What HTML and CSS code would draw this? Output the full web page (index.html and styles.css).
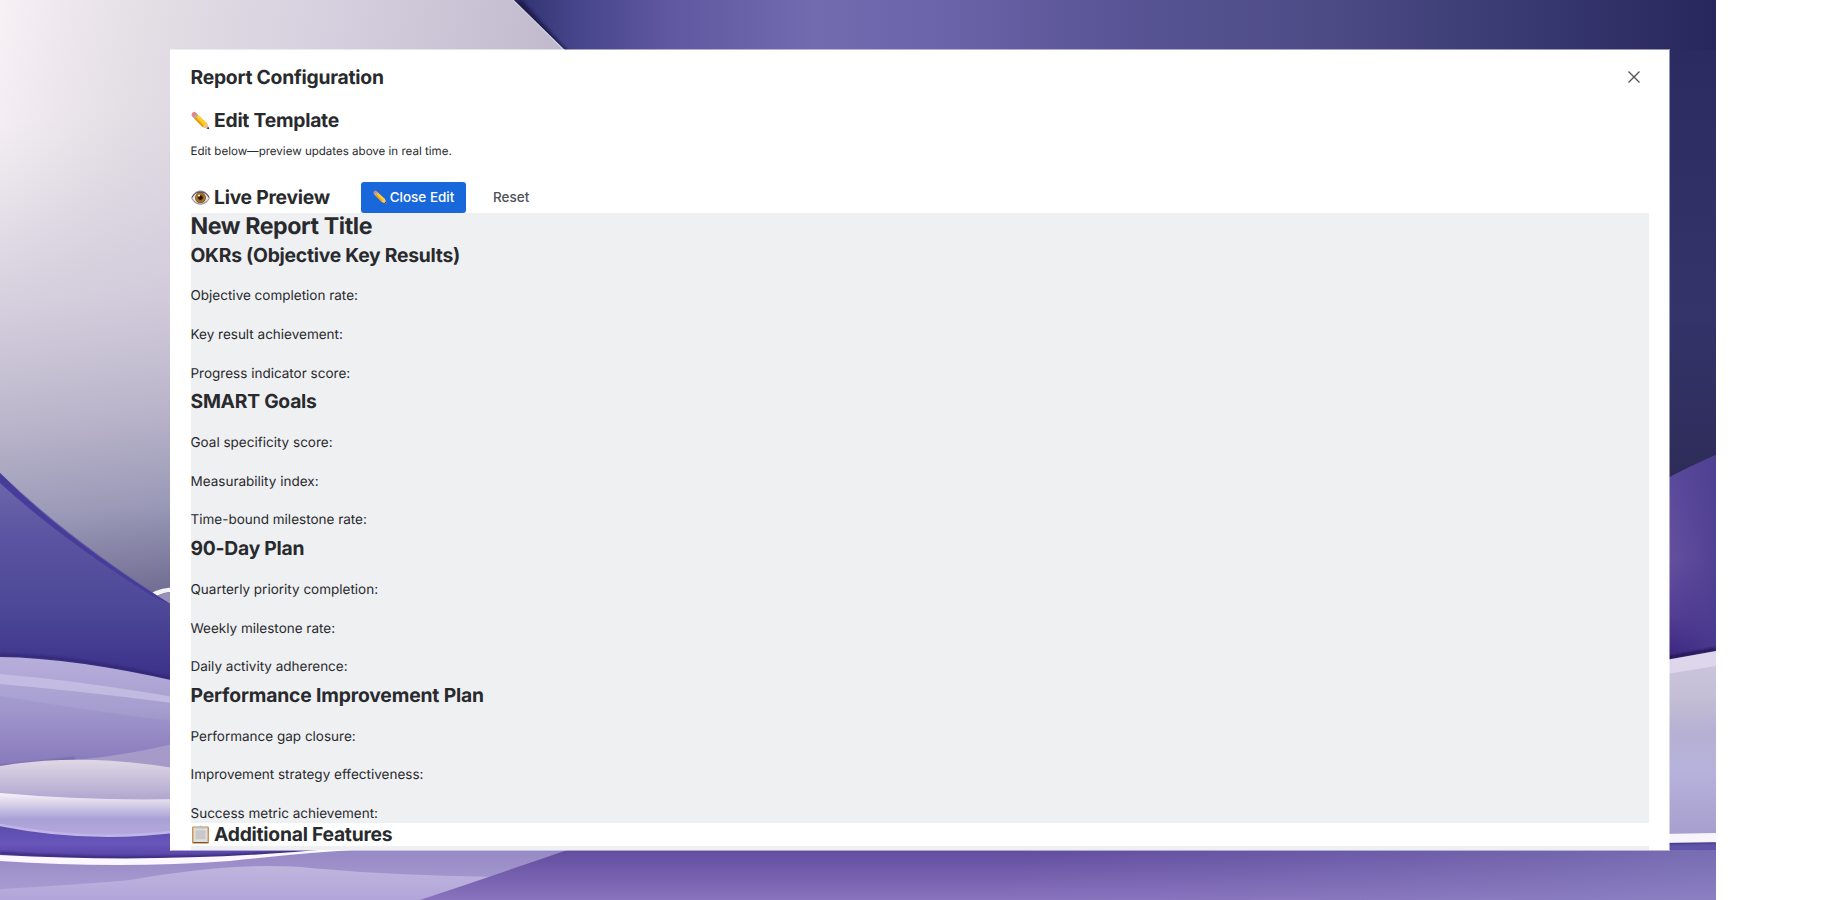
FILE: index.html
```html
<!DOCTYPE html>
<html lang="en">
<head>
<meta charset="utf-8">
<title>Report Configuration</title>
<link rel="stylesheet" href="styles.css">
</head>
<body>
<svg class="wallpaper" viewBox="0 0 1716 900" preserveAspectRatio="none" aria-hidden="true">
  <defs>
    <linearGradient id="sky" x1="500" x2="1716" y1="0" y2="0" gradientUnits="userSpaceOnUse">
      <stop offset="0" stop-color="#2a2d68"/><stop offset=".06" stop-color="#45448a"/><stop offset=".14" stop-color="#6058a0"/><stop offset=".26" stop-color="#736bb0"/><stop offset=".36" stop-color="#6c64aa"/><stop offset=".5" stop-color="#595596"/><stop offset=".68" stop-color="#4d4b86"/><stop offset=".82" stop-color="#3b3c74"/><stop offset="1" stop-color="#27275d"/>
    </linearGradient>
    <linearGradient id="night" x1="0" x2="0" y1="0" y2="1"><stop offset="0" stop-color="#2b2b62"/><stop offset=".6" stop-color="#34336a"/><stop offset="1" stop-color="#2d2c57"/></linearGradient>
    <linearGradient id="pearl" x1="0" y1="0" x2="560" y2="110" gradientUnits="userSpaceOnUse"><stop offset="0" stop-color="#f7f1f6"/><stop offset=".25" stop-color="#e4dee5"/><stop offset=".6" stop-color="#d5cede"/><stop offset="1" stop-color="#c0b9cc"/></linearGradient>
    <linearGradient id="pearlShade" x1="30" y1="120" x2="90" y2="600" gradientUnits="userSpaceOnUse"><stop offset="0" stop-color="#d8d2e0" stop-opacity="0"/><stop offset=".4" stop-color="#cfc9da" stop-opacity=".9"/><stop offset=".62" stop-color="#bbb5cb"/><stop offset=".82" stop-color="#9a99b7"/><stop offset="1" stop-color="#716d93"/></linearGradient>
    <linearGradient id="indigo" x1="0" y1="470" x2="0" y2="680" gradientUnits="userSpaceOnUse"><stop offset="0" stop-color="#6d6aad"/><stop offset=".35" stop-color="#5952a0"/><stop offset=".65" stop-color="#4d4998"/><stop offset="1" stop-color="#3b3089"/></linearGradient>
    <linearGradient id="waveA" x1="0" y1="657" x2="0" y2="765" gradientUnits="userSpaceOnUse"><stop offset="0" stop-color="#b7aedb"/><stop offset=".5" stop-color="#a59dce"/><stop offset="1" stop-color="#8779ba"/></linearGradient>
    <linearGradient id="waveB" x1="0" y1="760" x2="0" y2="798" gradientUnits="userSpaceOnUse"><stop offset="0" stop-color="#ded8e5"/><stop offset="1" stop-color="#b2a8d1"/></linearGradient>
    <linearGradient id="waveC" x1="0" y1="794" x2="0" y2="836" gradientUnits="userSpaceOnUse"><stop offset="0" stop-color="#f3f0fa"/><stop offset=".2" stop-color="#dcd6ea"/><stop offset=".6" stop-color="#a8a0d6"/><stop offset="1" stop-color="#b6aadd"/></linearGradient>
    <linearGradient id="waveD" x1="0" y1="826" x2="0" y2="860" gradientUnits="userSpaceOnUse"><stop offset="0" stop-color="#594bab"/><stop offset=".5" stop-color="#6957bb"/><stop offset="1" stop-color="#5440a3"/></linearGradient>
    <linearGradient id="waveE" x1="0" y1="850" x2="0" y2="900" gradientUnits="userSpaceOnUse"><stop offset="0" stop-color="#9689c5"/><stop offset="1" stop-color="#aba0d4"/></linearGradient>
    <linearGradient id="waveF" x1="0" y1="866" x2="0" y2="900" gradientUnits="userSpaceOnUse"><stop offset="0" stop-color="#bfb5dd"/><stop offset="1" stop-color="#b1a5d9"/></linearGradient>
    <linearGradient id="floor" x1="0" y1="850" x2="0" y2="900" gradientUnits="userSpaceOnUse"><stop offset="0" stop-color="#614c9e"/><stop offset="1" stop-color="#8973be"/></linearGradient>
    <linearGradient id="floorTint" x1="1000" y1="0" x2="1716" y2="0" gradientUnits="userSpaceOnUse"><stop offset="0" stop-color="#817bb9" stop-opacity="0"/><stop offset="1" stop-color="#8f8dc6" stop-opacity=".5"/></linearGradient>
    <linearGradient id="violet" x1="0" y1="460" x2="0" y2="656" gradientUnits="userSpaceOnUse"><stop offset="0" stop-color="#58499a"/><stop offset=".5" stop-color="#654f9f"/><stop offset=".8" stop-color="#523d93"/><stop offset="1" stop-color="#3c2780"/></linearGradient>
    <linearGradient id="violetSide" x1="1670" y1="0" x2="1716" y2="0" gradientUnits="userSpaceOnUse"><stop offset="0" stop-color="#4b3d90" stop-opacity="0"/><stop offset="1" stop-color="#4b3d90" stop-opacity=".75"/></linearGradient>
    <linearGradient id="mist" x1="0" y1="665" x2="0" y2="834" gradientUnits="userSpaceOnUse"><stop offset="0" stop-color="#cac4dc"/><stop offset=".2" stop-color="#c3bed5"/><stop offset=".4" stop-color="#b6b0d3"/><stop offset=".62" stop-color="#b7b2dc"/><stop offset="1" stop-color="#a79fce"/></linearGradient>
    <filter id="soft" x="-10%" y="-10%" width="120%" height="120%"><feGaussianBlur stdDeviation="1.6"/></filter>
    <filter id="softLine" filterUnits="userSpaceOnUse" x="0" y="0" width="1716" height="900"><feGaussianBlur stdDeviation="1.2"/></filter>
  </defs>
  <rect width="1716" height="900" fill="url(#sky)"/>
  <rect x="1660" y="50" width="56" height="440" fill="url(#night)"/>
  <path d="M511 0H522Q552 34 576 60H558Z" fill="#1d1b50" filter="url(#soft)"/>
  <path d="M0 0H513L570 56V620H0Z" fill="url(#pearl)"/>
  <path d="M0 0H513L570 56V620H0Z" fill="url(#pearlShade)"/>
  <path d="M513 0L565 51" stroke="#d8d2df" stroke-width="1.2"/>
  <path d="M150 594Q160 587 180 587V592Q164 591 155 597Z" fill="#f5f2f7"/>
  <path d="M155 597Q166 591 180 592V610Z" fill="#9791b7"/>
  <path d="M0 473Q72 542 175 607V690H0Z" fill="url(#indigo)"/>
  <path d="M0 473Q68 542 172 605L152 596Q60 538 0 483Z" fill="#473c99"/>
  <path d="M0 655Q80 656 180 681" fill="none" stroke="#2d216d" stroke-opacity=".7" stroke-width="3" filter="url(#softLine)"/>
  <path d="M0 657Q75 658 180 682V780H0Z" fill="url(#waveA)"/>
  <path d="M0 674Q75 680 180 698V704Q90 692 0 684Z" fill="#c8c0e4" opacity=".8"/>
  <path d="M0 696Q90 711 180 722V746Q115 756 0 766Z" fill="#8e80c5" opacity=".22"/>
  <path d="M75 760Q135 754 180 742V775H75Z" fill="#a69bc8"/>
  <path d="M0 766Q45 762 75 758" fill="none" stroke="#6c5b98" stroke-width="1.500" filter="url(#softLine)"/>
  <path d="M0 766Q82 752 180 769V803H0Z" fill="url(#waveB)"/>
  <path d="M0 793Q90 801 180 799V840H0Z" fill="url(#waveC)"/>
  <path d="M0 825Q90 843 180 831V850H600V868H0Z" fill="url(#waveD)"/>
  <path d="M0 825Q90 843 180 831" fill="none" stroke="#c1b5e7" stroke-width="2.5"/>
  <path d="M0 853Q150 864 340 848" fill="none" stroke="#302168" stroke-opacity=".8" stroke-width="2.5" filter="url(#softLine)"/>
  <path d="M0 859Q160 871 300 853Q360 845 420 845H600V900H0Z" fill="url(#waveE)"/>
  <path d="M0 855Q170 864 330 849H372Q310 852 230 861Q120 869 0 861Z" fill="#fbf7ff"/>
  <path d="M0 889Q75 885 130 880Q240 861 310 868Q400 876 500 877V900H0Z" fill="url(#waveF)"/>
  <path d="M420 900Q504 872 576 847H1716V900Z" fill="url(#floor)"/>
  <path d="M900 847H1716V900H900Z" fill="url(#floorTint)"/>
  <path d="M1660 482Q1690 466 1716 455V665H1660Z" fill="url(#violet)"/>
  <path d="M1660 482Q1690 466 1716 455V665H1660Z" fill="url(#violetSide)"/>
  <path d="M1660 659L1716 649" stroke="#251654" stroke-width="3" filter="url(#softLine)"/>
  <path d="M1660 661L1716 651V845H1660Z" fill="#ded7ec"/>
  <path d="M1660 675L1716 666V845H1660Z" fill="url(#mist)"/>
  <path d="M1660 843H1716V850H1660Z" fill="#5f55a8"/>
  <path d="M1660 843L1716 842" stroke="#362a7a" stroke-width="2" filter="url(#softLine)"/>
  <path d="M1660 834L1716 833V842L1660 843Z" fill="#f7f5fb"/>
</svg>

<svg class="symbols" aria-hidden="true">
  <defs>
    <linearGradient id="wood" x1="0" y1="1" x2="1" y2="0"><stop offset="0" stop-color="#e59a12"/><stop offset=".5" stop-color="#ffc928"/><stop offset="1" stop-color="#ffda4a"/></linearGradient>
    <radialGradient id="iris"><stop offset="0" stop-color="#20100a"/><stop offset=".32" stop-color="#28150b"/><stop offset=".5" stop-color="#8c5a18"/><stop offset=".8" stop-color="#b27a22"/><stop offset="1" stop-color="#4c2c12"/></radialGradient>
  </defs>
  <symbol id="pencil" viewBox="0 0 20 20">
    <path d="M5.4 2.1L16.9 12.6L19.3 19.3L12.2 17L1.6 6.2Z" fill="url(#wood)"/>
    <path d="M3.2 7.5L12.2 16.8L13.8 15.8L4.2 5.2Z" fill="#d98b12" opacity=".65"/>
    <path d="M16.8 12.6L19.2 19.2L12.2 16.8L13.6 15.2L15.2 14.6Z" fill="#e8c69a"/>
    <path d="M18.2 16.5L19.3 19.3L16.4 18.3Z" fill="#37322f"/>
    <path d="M2 6.4L5.6 2.4L7.5 4.2L3.9 8.2Z" fill="#9db0ba"/>
    <path d="M.8 5C-.1 3.1 2.2.5 4.2.8L5.7 2.5L2.2 6.5Z" fill="#ee7d86"/>
  </symbol>
  <symbol id="eye" viewBox="0 0 20 20">
    <path d="M.2 10.4C2 5.2 6 2.5 10 2.5s8 2.7 9.8 7.9C17.5 15.4 14 17.5 10 17.5S2.500 15.400.2 10.400Z" fill="#a8979e"/>
    <path d="M1.2 10.8C3.2 7 6.3 4.8 10 4.8s6.8 2.2 8.7 6C16.5 14.4 13.5 16.2 10 16.2S3.5 14.4 1.2 10.8Z" fill="#e9e5e8"/>
    <path d="M1.2 9.9C3 5.7 6.2 4.2 10 4.2s7 1.5 8.8 5.7" fill="none" stroke="#59474f" stroke-width="1"/>
    <circle cx="10" cy="10.2" r="5.6" fill="url(#iris)"/>
    <circle cx="8.5" cy="8" r="1.1" fill="#fff" opacity=".9"/>
  </symbol>
  <symbol id="clipboard" viewBox="0 0 20 20">
    <rect x="1.2" y="1.6" width="17.6" height="18" rx="1.3" fill="#c58238"/>
    <rect x="2.5" y="2.6" width="15" height="15.6" fill="#dedede"/>
    <rect x="4.8" y="5.6" width="10.4" height="9.4" fill="#c8c8c8"/>
    <path d="M2.5 18.5H17.5" stroke="#6d431b" stroke-width="1"/>
    <path d="M5 3.8V2.2H8.200Q8.400.4 10 .4T11.800 2.200H15V3.800Z" fill="#b9bdbe"/>
  </symbol>
</svg>

<main class="dialog">
  <header class="dialog-header">
    <h2 class="heading dialog-title">Report Configuration</h2>
    <button class="close" aria-label="Close"><svg class="close-icon" viewBox="0 0 12 12"><path d="M.5.500L11.500 11.500M11.500.5L.5 11.500"/></svg></button>
  </header>
  <section class="editor">
    <h2 class="heading with-icon"><svg class="emoji"><use href="#pencil"/></svg><span class="edit-title">Edit Template</span></h2>
    <p class="hint">Edit below—preview updates above in real time.</p>
  </section>
  <div class="toolbar">
    <h2 class="heading with-icon live"><svg class="emoji"><use href="#eye"/></svg><span class="live-title">Live Preview</span></h2>
    <button class="btn primary"><svg class="emoji small"><use href="#pencil"/></svg><span>Close Edit</span></button>
    <button class="btn plain">Reset</button>
  </div>
  <article class="preview">
    <h1 class="report-title">New Report Title</h1>
    <section>
      <h2 class="heading group">OKRs (Objective Key Results)</h2>
      <p class="metric">Objective completion rate:</p>
      <p class="metric">Key result achievement:</p>
      <p class="metric">Progress indicator score:</p>
    </section>
    <section>
      <h2 class="heading group">SMART Goals</h2>
      <p class="metric">Goal specificity score:</p>
      <p class="metric">Measurability index:</p>
      <p class="metric">Time-bound milestone rate:</p>
    </section>
    <section>
      <h2 class="heading group">90-Day Plan</h2>
      <p class="metric">Quarterly priority completion:</p>
      <p class="metric">Weekly milestone rate:</p>
      <p class="metric">Daily activity adherence:</p>
    </section>
    <section>
      <h2 class="heading group wide">Performance Improvement Plan</h2>
      <p class="metric">Performance gap closure:</p>
      <p class="metric">Improvement strategy effectiveness:</p>
      <p class="metric">Success metric achievement:</p>
    </section>
  </article>
  <h2 class="heading with-icon extra"><svg class="emoji"><use href="#clipboard"/></svg><span>Additional Features</span></h2>
  <div class="features"></div>
</main>
</body>
</html>
```

FILE: styles.css
```css
* { box-sizing: border-box; }
body {
  margin: 0;
  height: 900px;
  overflow: hidden;
  display: grid;
  place-items: center;
  background: #fff;
  color: #292a2e;
  font-family: Inter, "Liberation Sans", sans-serif;
  text-rendering: geometricPrecision;
}
h1, h2, p { margin: 0; }
button { border: 0; padding: 0; background: none; font: inherit; color: inherit; }
.wallpaper { position: absolute; left: 0; top: 0; width: 1716px; height: 900px; }
.symbols { position: absolute; width: 0; height: 0; }
.dialog {
  position: relative;
  width: 1500px;
  height: 802px;
  padding: 0 19.5px;
  overflow: hidden;
  background: #fff;
  background-clip: padding-box;
  border: 1px solid rgba(255, 255, 255, .5);
  border-left-color: #fff;
}
.heading { font-size: 19.3px; line-height: 24px; font-weight: 650; letter-spacing: -.24px; white-space: nowrap; }
.dialog-header { display: flex; justify-content: space-between; align-items: center; height: 55px; padding: 0 10px 1px 0; }
.close { display: flex; }
.close-icon { width: 12px; height: 12px; fill: none; stroke: #505258; stroke-width: 1.3; }
.with-icon { display: flex; align-items: center; gap: 4.5px; }
.emoji { width: 19px; height: 19px; flex: none; }
.emoji.small { width: 14px; height: 14px; }
.editor { height: 77px; padding-top: 3px; }
.hint { margin-top: 11px; font-size: 11.55px; line-height: 16px; }
.toolbar { display: flex; align-items: center; height: 31px; }
.live { width: 170.5px; padding-bottom: 1px; }
.btn { height: 31px; padding-bottom: 1px; font-size: 13.5px; font-weight: 500; }
.primary { display: flex; align-items: center; justify-content: center; gap: 3px; width: 105px; border-radius: 3px; background: #1868db; color: #fff; }
.plain { margin-left: 27px; color: #505258; }
.preview { width: 1458.4px; height: 610px; background: #eff0f2; }
.report-title { height: 23.6px; font-size: 23.2px; line-height: 26.5px; font-weight: 650; letter-spacing: -.42px; white-space: nowrap; }
.group { height: 30.9px; line-height: 37px; }
.wide { letter-spacing: -.15px; }
.metric { height: 38.62px; padding-top: 20px; font-size: 13.5px; line-height: 19.3px; }
.extra { height: 23px; padding-bottom: 1px; }
.features { width: 1458.4px; height: 8px; background: #eff0f2; }
```
